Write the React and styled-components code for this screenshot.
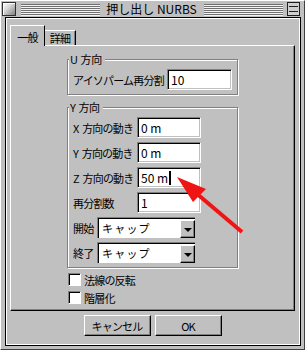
import styled, { createGlobalStyle } from 'styled-components';

const GlobalStyle = createGlobalStyle`
  html, body {
    margin: 0;
    padding: 0;
    background: #c0c0c0;
  }
  body {
    font-family: "Noto Sans CJK JP", "Noto Sans", sans-serif;
    color: #000;
  }
  * {
    box-sizing: border-box;
  }
`;

export default function App() {
  return (
    <>
      <GlobalStyle />
      <Window>
        <TitleBar>
          <CloseBox />
          <Stripes />
          <Title>押し出し NURBS</Title>
          <Stripes />
          <ZoomBox>
            <ZoomSlot />
            <ZoomSlot />
          </ZoomBox>
        </TitleBar>

        <Frame>
          <Tabs>
            <Tab $active>一般</Tab>
            <Tab>詳細</Tab>
          </Tabs>

          <Panel>
            <Group>
              <Legend>U 方向</Legend>
              <Rows>
                <Row>
                  <Label $width={94}>アイソパーム再分割</Label>
                  <Field $width={65}>10</Field>
                </Row>
              </Rows>
            </Group>

            <Group $gap={6}>
              <Legend>Y 方向</Legend>
              <Rows>
                <Row>
                  <Label $width={64}>X 方向の動き</Label>
                  <Field $width={64}>0 m</Field>
                </Row>
                <Row>
                  <Label $width={64}>Y 方向の動き</Label>
                  <Field $width={64}>0 m</Field>
                </Row>
                <Row>
                  <Label $width={64}>Z 方向の動き</Label>
                  <Field $width={64}>
                    50 m<Caret />
                  </Field>
                </Row>
                <Row>
                  <Label $width={64}>再分割数</Label>
                  <Field $width={64}>1</Field>
                </Row>
                <Row>
                  <Label $width={24}>開始</Label>
                  <Select>
                    <SelectText>キャップ</SelectText>
                    <DropButton>
                      <DownArrow />
                    </DropButton>
                  </Select>
                </Row>
                <Row>
                  <Label $width={24}>終了</Label>
                  <Select>
                    <SelectText>キャップ</SelectText>
                    <DropButton>
                      <DownArrow />
                    </DropButton>
                  </Select>
                </Row>
              </Rows>
            </Group>

            <Checks>
              <CheckRow>
                <CheckBox />
                <Label>法線の反転</Label>
              </CheckRow>
              <CheckRow>
                <CheckBox />
                <Label>階層化</Label>
              </CheckRow>
            </Checks>
          </Panel>

          <Buttons>
            <Button>キャンセル</Button>
            <Button>OK</Button>
          </Buttons>
        </Frame>

        {/* red annotation arrow pointing at the Z field */}
        <Annotation width="305" height="350" viewBox="0 0 305 350">
          <line x1="242" y1="232" x2="196" y2="193" stroke="#f01414" strokeWidth="4" />
          <polygon points="177,177 206,189 193,202" fill="#f01414" />
        </Annotation>
      </Window>
    </>
  );
}

const Window = styled.div`
  position: relative;
  width: 305px;
  height: 350px;
  background: #c0c0c0;
  border-top: 1px solid #fff;
  border-left: 1px solid #fff;
  border-right: 1px solid #404040;
  border-bottom: 1px solid #404040;
`;

const TitleBar = styled.div`
  display: flex;
  align-items: center;
  height: 16px;
  padding: 0 4px 0 1px;
`;

const CloseBox = styled.div`
  width: 14px;
  height: 14px;
  border: 1px solid #303030;
  background: linear-gradient(135deg, #ffffff 0%, #d8d8d8 40%, #808080 100%);
  box-shadow: inset 1px 1px 0 #fff;
`;

const Stripes = styled.div`
  flex: 1;
  height: 12px;
  margin: 2px 4px 0 5px;
  background-image: linear-gradient(to bottom, #707070 0 50%, #f4f4f4 50% 100%);
  background-size: 100% 2px;
`;

const Title = styled.div`
  font-size: 12px;
  line-height: 16px;
  padding: 0 2px;
  white-space: nowrap;
`;

const ZoomBox = styled.div`
  width: 13px;
  height: 14px;
  border: 1px solid #202020;
  background: #d0d0d0;
  display: flex;
  flex-direction: column;
  justify-content: space-evenly;
  padding: 0 1px;
`;

const ZoomSlot = styled.div`
  height: 1px;
  background: #202020;
`;

const Frame = styled.div`
  margin-left: 4px;
  width: 296px;
  height: 329px;
  border: 1px solid #000;
  box-shadow: inset 1px 1px 0 #fff, inset -1px -1px 0 #fff;
  padding: 7px 5px 0 4px;
`;

const Tabs = styled.div`
  position: relative;
  z-index: 1;
  display: flex;
  align-items: flex-end;
  height: 20px;
`;

const Tab = styled.div`
  width: ${(p) => (p.$active ? 35 : 31)}px;
  height: ${(p) => (p.$active ? 21 : 15)}px;
  margin-bottom: ${(p) => (p.$active ? -1 : 0)}px;
  background: #c0c0c0;
  border-top: 1px solid #fff;
  border-left: ${(p) => (p.$active ? '1px solid #fff' : 'none')};
  border-right: 1px solid #000;
  box-shadow: ${(p) => (p.$active ? 'none' : 'inset -1px 0 0 #808080')};
  display: flex;
  align-items: center;
  justify-content: center;
  padding-top: ${(p) => (p.$active ? 1 : 0)}px;
  font-size: 11px;
  letter-spacing: -0.8px;
`;

const Panel = styled.div`
  width: 285px;
  height: 266px;
  border-top: 1px solid #fff;
  border-left: 1px solid #fff;
  border-right: 1px solid #000;
  border-bottom: 1px solid #000;
  box-shadow: inset -1px -1px 0 #808080;
  padding-top: 7px;
  display: flex;
  flex-direction: column;
  align-items: center;
`;

const Group = styled.fieldset`
  width: 171px;
  margin: ${(p) => p.$gap || 0}px 0 0;
  padding: 4px 5px 4px 5px;
  border: 1px solid #808080;
  box-shadow: inset 1px 1px 0 #fff, 1px 1px 0 #fff;
  min-width: 0;
`;

const Legend = styled.legend`
  margin-left: -4px;
  padding: 0 3px 0 1px;
  font-size: 11px;
  line-height: 12px;
  letter-spacing: -0.4px;
  word-spacing: 1px;
  background: #c0c0c0;
`;

const Rows = styled.div`
  display: flex;
  flex-direction: column;
  gap: 4px;
`;

const Row = styled.div`
  display: flex;
  align-items: center;
  height: 21px;
`;

const Label = styled.span`
  flex: 0 0 ${(p) => (p.$width ? `${p.$width}px` : 'auto')};
  font-size: 11px;
  letter-spacing: -0.8px;
  word-spacing: 2px;
  white-space: nowrap;
`;

const Field = styled.div`
  width: ${(p) => p.$width}px;
  height: 21px;
  background: #fff;
  border-top: 1px solid #808080;
  border-left: 1px solid #808080;
  border-right: 1px solid #fff;
  border-bottom: 1px solid #fff;
  box-shadow: inset 1px 1px 0 #000, inset -1px -1px 0 #c0c0c0;
  padding-left: 3px;
  display: flex;
  align-items: center;
  font-size: 12px;
  white-space: nowrap;
`;

const Caret = styled.span`
  display: inline-block;
  width: 2px;
  height: 14px;
  margin-left: 1px;
  background: #000;
`;

const Select = styled.div`
  width: 98px;
  height: 21px;
  display: flex;
  background: #fff;
  border-top: 1px solid #808080;
  border-left: 1px solid #808080;
  box-shadow: inset 1px 1px 0 #000;
`;

const SelectText = styled.span`
  flex: 1;
  padding: 2px 0 0 4px;
  font-size: 11px;
  line-height: 17px;
  letter-spacing: 1.2px;
`;

const DropButton = styled.div`
  width: 15px;
  margin-top: 2px;
  background: #c0c0c0;
  border-top: 1px solid #fff;
  border-left: 1px solid #fff;
  border-right: 1px solid #000;
  border-bottom: 1px solid #000;
  box-shadow: inset -1px -1px 0 #808080;
  display: flex;
  align-items: center;
  justify-content: center;
`;

const DownArrow = styled.span`
  width: 0;
  height: 0;
  border-left: 4px solid transparent;
  border-right: 4px solid transparent;
  border-top: 4px solid #000;
  margin-top: 1px;
`;

const Checks = styled.div`
  width: 171px;
  margin-top: 5px;
  display: flex;
  flex-direction: column;
  gap: 5px;
`;

const CheckRow = styled.div`
  display: flex;
  align-items: center;
  gap: 3px;
  height: 13px;
  padding-left: 1px;
`;

const CheckBox = styled.span`
  width: 13px;
  height: 13px;
  background: #fff;
  border-top: 1px solid #808080;
  border-left: 1px solid #808080;
  border-right: 1px solid #fff;
  border-bottom: 1px solid #fff;
  box-shadow: inset 1px 1px 0 #000;
`;

const Buttons = styled.div`
  display: flex;
  justify-content: center;
  gap: 4px;
  margin-top: 4px;
`;

const Button = styled.button`
  width: 67px;
  height: 21px;
  padding: 0;
  background: #c0c0c0;
  border-top: 1px solid #fff;
  border-left: 1px solid #fff;
  border-right: 1px solid #000;
  border-bottom: 1px solid #000;
  box-shadow: inset -1px -1px 0 #808080;
  font-family: inherit;
  font-size: 11px;
  letter-spacing: -0.8px;
  color: #000;
`;

const Annotation = styled.svg`
  position: absolute;
  left: -1px;
  top: -1px;
  pointer-events: none;
`;
